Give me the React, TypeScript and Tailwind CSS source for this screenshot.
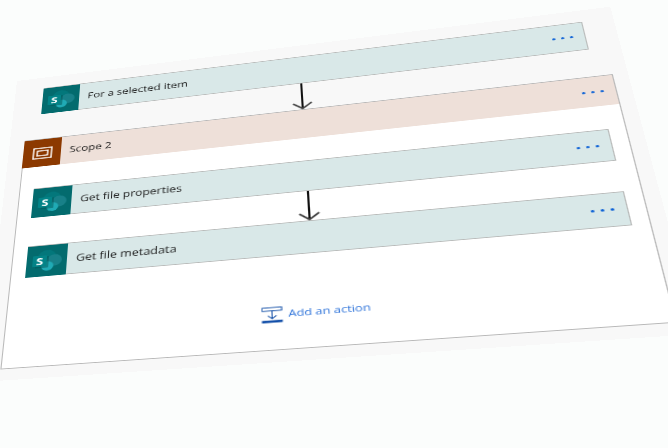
import type { ReactNode } from "react";

function SharePointIcon() {
  return (
    <svg viewBox="0 0 40 40" className="-ml-px h-10 w-10 shrink-0 bg-[#036b6e]" aria-hidden="true">
      <circle cx="20" cy="15" r="9" fill="#03777b" />
      <circle cx="27.500" cy="20" r="7.500" fill="#188088" />
      <circle cx="21" cy="27" r="6" fill="#20aab5" />
      <rect x="9" y="14" width="13" height="15" rx="1" fill="#025558" opacity="0.5" />
      <rect x="6" y="13" width="14" height="14" rx="1" fill="#038387" />
      <text x="13" y="25" fontSize="13" fontWeight="700" textAnchor="middle" fill="#fff" className="font-['Open_Sans',sans-serif]">
        S
      </text>
    </svg>
  );
}

function ScopeIcon() {
  return (
    <svg viewBox="0 0 40 40" className="-ml-px h-10 w-10 shrink-0 bg-[#8c3900]" fill="none" stroke="#fff" strokeWidth="1.500" aria-hidden="true">
      <rect x="11" y="13" width="19" height="15" />
      <rect x="15" y="17" width="11" height="7" />
    </svg>
  );
}

function MoreButton({ label }: { label: string }) {
  return (
    <button type="button" aria-label={label} className="ml-auto flex h-full items-center gap-[5px] pr-[10px]">
      <span className="size-[3px] rounded-full bg-[#0a60d6]" />
      <span className="size-[3px] rounded-full bg-[#0a60d6]" />
      <span className="size-[3px] rounded-full bg-[#0a60d6]" />
    </button>
  );
}

function StepHeader({ icon, title }: { icon: ReactNode; title: string }) {
  return (
    <>
      {icon}
      <span className="ml-[9px] text-xs text-[#1a1a1a]">{title}</span>
      <MoreButton label={`More options for ${title}`} />
    </>
  );
}

function ActionCard({ title }: { title: string }) {
  return (
    <div className="flex h-[41px] items-center border border-[#b9bbba] bg-[#d9e8e8]">
      <StepHeader icon={<SharePointIcon />} title={title} />
    </div>
  );
}

function Connector() {
  return (
    <svg viewBox="0 0 20 38" className="mx-auto block h-[38px] w-5" fill="none" aria-hidden="true">
      <path d="M10 0V37" stroke="#111" strokeWidth="2" />
      <path d="M1 29L10 37L19 29" stroke="#444" strokeWidth="2" />
    </svg>
  );
}

function AddAction() {
  return (
    <button type="button" className="mx-auto flex items-center gap-[5px] text-[11px] text-[#2f74da]">
      <svg viewBox="0 0 20 20" className="size-[19px]" fill="none" stroke="#1450a8" aria-hidden="true">
        <rect x="1" y="1" width="18" height="4" />
        <path d="M10 5V14M6 11L10 14.500L14 11" />
        <rect x="1" y="17" width="18" height="2" fill="#0c4bab" />
      </svg>
      Add an action
    </button>
  );
}

export default function App() {
  return (
    <main className="min-h-screen overflow-hidden bg-[#fbfdfc] font-['Open_Sans','Noto_Sans',sans-serif]">
      <div className="w-full max-w-[597px] origin-top-left bg-[#f8f8f8] pt-[17px] pr-[13px] pb-[13px] pl-4 [transform:matrix3d(0.8877,-0.1256,0,-0.0001737,-0.0776,0.5852,0,-0.0003847,0,0,1,0,17,81,0,1)]">
        <div className="px-[15px]">
          <ActionCard title="For a selected item" />
          <Connector />
        </div>
        <section className="border border-[#b8b8b8] bg-white pb-[30px]">
          <header className="flex h-10 items-center bg-[#eee0d9]">
            <StepHeader icon={<ScopeIcon />} title="Scope 2" />
          </header>
          <div className="px-[14px] pt-[31px] pb-[60px]">
            <ActionCard title="Get file properties" />
            <Connector />
            <ActionCard title="Get file metadata" />
          </div>
          <AddAction />
        </section>
      </div>
    </main>
  );
}
